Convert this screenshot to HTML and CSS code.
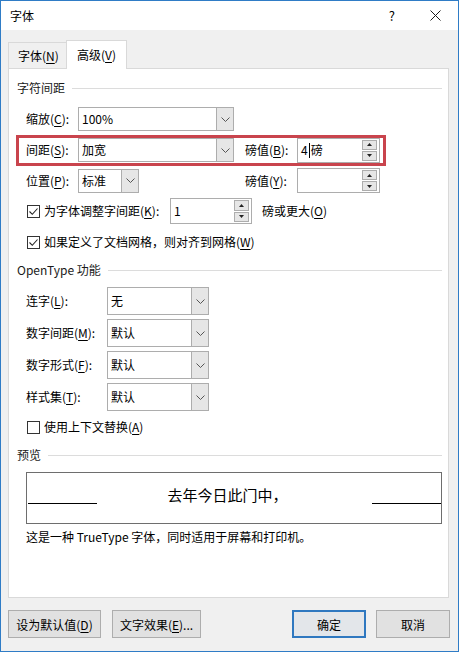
FILE: index.html
```html
<!DOCTYPE html>
<html lang="zh-CN">
<head>
  <meta charset="UTF-8">
  <title>字体</title>
  <link rel="stylesheet" href="styles.css">
</head>
<body>
  <div class="window">
    <div class="titlebar">
      <span class="title">字体</span>
      <span class="help">?</span>
      <span class="close">
        <svg width="11" height="11" viewBox="0 0 11 11"><path d="M0.5 0.5L10.5 10.5M10.5 0.5L0.5 10.5" stroke="#1a1a1a" stroke-width="1" fill="none"/></svg>
      </span>
    </div>

    <div class="content">
      <div class="tabs">
        <div class="tab">字体(<u>N</u>)</div>
        <div class="tab active">高级(<u>V</u>)</div>
      </div>

      <div class="panel">
        <div class="group-title">字符间距</div>

        <div class="row row-scale">
          <span class="label label-short">缩放(<u>C</u>):</span>
          <div class="combo combo-wide">
            <span class="value">100%</span>
            <span class="arrow"><svg width="9" height="5" viewBox="0 0 9 5"><path d="M0.5 0.5L4.5 4.5L8.5 0.5" stroke="#555" fill="none"/></svg></span>
          </div>
        </div>

        <div class="row highlight">
          <span class="label label-short">间距(<u>S</u>):</span>
          <div class="combo combo-wide">
            <span class="value">加宽</span>
            <span class="arrow"><svg width="9" height="5" viewBox="0 0 9 5"><path d="M0.5 0.5L4.5 4.5L8.5 0.5" stroke="#555" fill="none"/></svg></span>
          </div>
          <span class="label label-short label-pt">磅值(<u>B</u>):</span>
          <div class="spin spin-pt">
            <span class="value">4<i class="caret"></i>磅</span>
            <span class="spin-btns">
              <span class="spin-btn"><svg width="5" height="3" viewBox="0 0 5 3"><path d="M0 3L2.5 0L5 3Z" fill="#222"/></svg></span>
              <span class="spin-btn"><svg width="5" height="3" viewBox="0 0 5 3"><path d="M0 0L2.5 3L5 0Z" fill="#222"/></svg></span>
            </span>
          </div>
        </div>

        <div class="row row-position">
          <span class="label label-short">位置(<u>P</u>):</span>
          <div class="combo combo-narrow">
            <span class="value">标准</span>
            <span class="arrow"><svg width="9" height="5" viewBox="0 0 9 5"><path d="M0.5 0.5L4.5 4.5L8.5 0.5" stroke="#555" fill="none"/></svg></span>
          </div>
          <span class="label label-short label-pt-far">磅值(<u>Y</u>):</span>
          <div class="spin spin-pt">
            <span class="value"></span>
            <span class="spin-btns">
              <span class="spin-btn"><svg width="5" height="3" viewBox="0 0 5 3"><path d="M0 3L2.5 0L5 3Z" fill="#222"/></svg></span>
              <span class="spin-btn"><svg width="5" height="3" viewBox="0 0 5 3"><path d="M0 0L2.5 3L5 0Z" fill="#222"/></svg></span>
            </span>
          </div>
        </div>

        <div class="row row-kerning">
          <span class="check"><svg width="11" height="11" viewBox="0 0 11 11"><path d="M1.5 5.5L4.3 8.3L9.5 2.5" stroke="#222" stroke-width="1.1" fill="none"/></svg></span>
          <span class="check-label kerning-label">为字体调整字间距(<u>K</u>):</span>
          <div class="spin spin-kern">
            <span class="value">1</span>
            <span class="spin-btns">
              <span class="spin-btn"><svg width="5" height="3" viewBox="0 0 5 3"><path d="M0 3L2.5 0L5 3Z" fill="#222"/></svg></span>
              <span class="spin-btn"><svg width="5" height="3" viewBox="0 0 5 3"><path d="M0 0L2.5 3L5 0Z" fill="#222"/></svg></span>
            </span>
          </div>
          <span class="label kern-after">磅或更大(<u>O</u>)</span>
        </div>

        <div class="row row-grid">
          <span class="check"><svg width="11" height="11" viewBox="0 0 11 11"><path d="M1.5 5.5L4.3 8.3L9.5 2.5" stroke="#222" stroke-width="1.1" fill="none"/></svg></span>
          <span class="check-label">如果定义了文档网格，则对齐到网格(<u>W</u>)</span>
        </div>

        <div class="group-title group-opentype">OpenType 功能</div>

        <div class="row row-ot first">
          <span class="label label-long">连字(<u>L</u>):</span>
          <div class="combo combo-ot">
            <span class="value">无</span>
            <span class="arrow"><svg width="9" height="5" viewBox="0 0 9 5"><path d="M0.5 0.5L4.5 4.5L8.5 0.5" stroke="#555" fill="none"/></svg></span>
          </div>
        </div>
        <div class="row row-ot">
          <span class="label label-long">数字间距(<u>M</u>):</span>
          <div class="combo combo-ot">
            <span class="value">默认</span>
            <span class="arrow"><svg width="9" height="5" viewBox="0 0 9 5"><path d="M0.5 0.5L4.5 4.5L8.5 0.5" stroke="#555" fill="none"/></svg></span>
          </div>
        </div>
        <div class="row row-ot">
          <span class="label label-long">数字形式(<u>F</u>):</span>
          <div class="combo combo-ot">
            <span class="value">默认</span>
            <span class="arrow"><svg width="9" height="5" viewBox="0 0 9 5"><path d="M0.5 0.5L4.5 4.5L8.5 0.5" stroke="#555" fill="none"/></svg></span>
          </div>
        </div>
        <div class="row row-ot">
          <span class="label label-long">样式集(<u>T</u>):</span>
          <div class="combo combo-ot">
            <span class="value">默认</span>
            <span class="arrow"><svg width="9" height="5" viewBox="0 0 9 5"><path d="M0.5 0.5L4.5 4.5L8.5 0.5" stroke="#555" fill="none"/></svg></span>
          </div>
        </div>

        <div class="row row-context">
          <span class="check"></span>
          <span class="check-label">使用上下文替换(<u>A</u>)</span>
        </div>

        <div class="group-title group-preview">预览</div>

        <div class="preview">
          <span class="preview-line left"></span>
          <span class="preview-text">去年今日此门中，</span>
          <span class="preview-line"></span>
        </div>
        <div class="preview-note">这是一种 TrueType 字体，同时适用于屏幕和打印机。</div>
      </div>

      <div class="buttons">
        <button class="btn btn-set">设为默认值(<u>D</u>)</button>
        <button class="btn btn-effects">文字效果(<u>E</u>)...</button>
        <span class="spacer"></span>
        <button class="btn btn-ok">确定</button>
        <button class="btn btn-cancel">取消</button>
      </div>
    </div>
  </div>
</body>
</html>
```

FILE: styles.css
```css
* {
  box-sizing: border-box;
}

body {
  margin: 0;
  padding: 0;
  font-family: "Noto Sans CJK SC", "Microsoft YaHei", sans-serif;
  font-size: 12px;
  color: #000;
}

u {
  text-decoration: underline;
  text-underline-offset: 2px;
}

.window {
  width: 459px;
  height: 652px;
  border: 1px solid #2f7cc6;
  background-color: #f0f0f0;
}

.titlebar {
  display: flex;
  align-items: center;
  height: 29px;
  padding-left: 9px;
  background-color: #fff;
}

.title {
  line-height: 16px;
}

.help {
  margin-left: auto;
  font-size: 13px;
  line-height: 16px;
}

.close {
  display: flex;
  margin-left: 35px;
  margin-right: 17px;
}

.content {
  padding: 10px 10px 0 7px;
}

.tabs {
  position: relative;
  z-index: 1;
  display: flex;
  align-items: flex-end;
  height: 29px;
  margin-bottom: -1px;
}

.tab {
  display: flex;
  align-items: center;
  height: 26px;
  width: 59px;
  margin-bottom: 1px;
  padding-left: 9px;
  border: 1px solid #d9d9d9;
  border-bottom: none;
  background-color: #f0f0f0;
  line-height: 16px;
}

.tab.active {
  height: 29px;
  width: 61px;
  margin-bottom: 0;
  margin-left: -1px;
  padding-left: 10px;
  background-color: #fff;
}

.panel {
  width: 441px;
  height: 530px;
  padding: 11px 6px 0 8px;
  border: 1px solid #d9d9d9;
  background-color: #fff;
}

.group-title {
  display: flex;
  align-items: center;
  height: 16px;
  line-height: 16px;
  color: #1a1a1a;
}

.group-title::after {
  content: "";
  flex: 1;
  height: 1px;
  margin-left: 7px;
  background-color: #dcdcdc;
}

.group-opentype {
  margin-top: 12px;
}

.group-preview {
  margin-top: 12px;
}

.row {
  display: flex;
  align-items: center;
  margin-left: 9px;
}

.label,
.check-label {
  line-height: 16px;
  white-space: nowrap;
}

.label-short {
  width: 52px;
}

.label-long {
  width: 81px;
}

.label-pt {
  margin-left: 11px;
}

.label-pt-far {
  margin-left: 106px;
}

.row-scale {
  margin-top: 11px;
}

.highlight {
  width: 370px;
  height: 31px;
  margin-top: 4px;
  margin-left: -1px;
  padding: 0 3px 1px 7px;
  border: 3px solid #c9444d;
}

.row-position {
  margin-top: 2px;
}

.row-kerning {
  height: 26px;
  margin-top: 5px;
}

.row-grid {
  height: 16px;
  margin-top: 10px;
}

.row-ot {
  margin-top: 4px;
}

.row-ot.first {
  margin-top: 9px;
}

.row-context {
  height: 16px;
  margin-top: 8px;
}

.combo {
  display: flex;
  height: 24px;
  border: 1px solid #adadad;
  background-color: #fff;
}

.combo .value {
  flex: 1;
  padding-left: 3px;
  line-height: 22px;
}

.combo .arrow {
  display: flex;
  align-items: center;
  justify-content: center;
  width: 17px;
  border-left: 1px solid #adadad;
  background-color: #e6e6e6;
}

.combo-wide {
  width: 156px;
}

.combo-narrow {
  width: 61px;
}

.combo-ot {
  width: 102px;
  height: 28px;
}

.combo-ot .value {
  line-height: 26px;
}

.spin {
  display: flex;
  height: 25px;
  padding: 1px 2px 1px 0;
  border: 1px solid #adadad;
  background-color: #fff;
}

.spin .value {
  flex: 1;
  display: flex;
  align-items: center;
  padding-left: 3px;
  line-height: 16px;
}

.spin-pt {
  width: 83px;
}

.spin-kern {
  width: 82px;
  height: 26px;
}

.caret {
  display: inline-block;
  width: 1px;
  height: 15px;
  margin: 0 1px;
  background-color: #000;
}

.spin-btns {
  display: flex;
  flex-direction: column;
  gap: 1px;
  width: 15px;
}

.spin-btn {
  display: flex;
  flex: 1;
  align-items: center;
  justify-content: center;
  border: 1px solid #adadad;
  background-color: #e6e6e6;
}

.check {
  display: flex;
  align-items: center;
  justify-content: center;
  width: 13px;
  height: 13px;
  margin-left: 1px;
  margin-right: 4px;
  border: 1px solid #333;
  background-color: #fff;
}

.kerning-label {
  width: 126px;
}

.kern-after {
  margin-left: 10px;
}

.preview {
  display: flex;
  align-items: flex-start;
  height: 52px;
  margin-top: 9px;
  margin-left: 9px;
  border: 1px solid #6e6e6e;
}

.preview-line {
  width: 69px;
  height: 1px;
  margin-top: 30px;
  background-color: #000;
}

.preview-line.left {
  margin-left: 1px;
}

.preview-text {
  flex: 1;
  margin-top: 12px;
  padding-right: 14px;
  font-size: 15px;
  font-weight: normal;
  line-height: 20px;
  text-align: center;
  color: #000;
}

.preview-note {
  margin-top: 5px;
  margin-left: 9px;
  line-height: 16px;
}

.buttons {
  display: flex;
  width: 442px;
  margin-top: 12px;
}

.btn {
  height: 28px;
  padding: 0;
  border: 1px solid #adadad;
  background-color: #e1e1e1;
  font-family: inherit;
  font-size: 12px;
  color: #000;
}

.btn-set {
  width: 93px;
}

.btn-effects {
  width: 89px;
  margin-left: 11px;
}

.spacer {
  flex: 1;
}

.btn-ok {
  width: 74px;
  border: 2px solid #2f78c0;
  background-color: #e3e6ea;
}

.btn-cancel {
  width: 74px;
  margin-left: 10px;
}
```
